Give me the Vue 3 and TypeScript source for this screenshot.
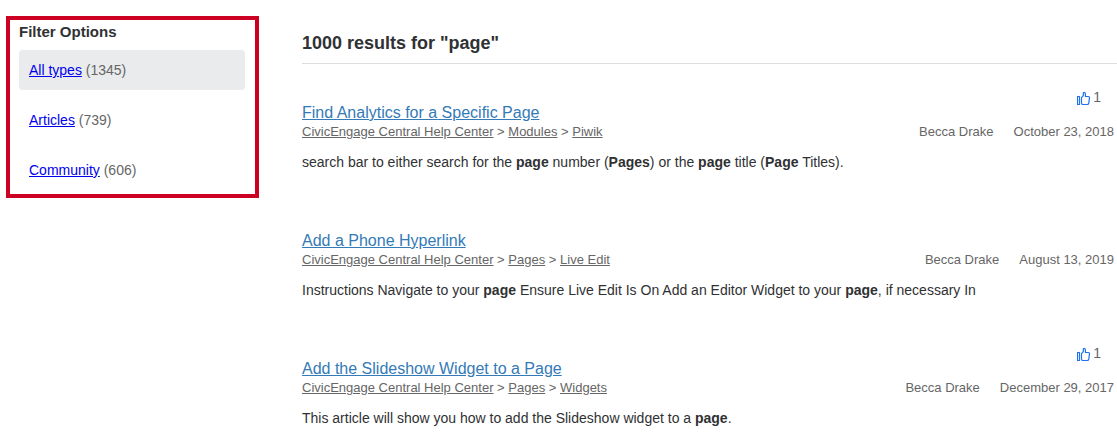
<script setup lang="ts">
interface Filter {
  label: string
  count: number
}

interface Segment {
  text: string
  match?: boolean
}

interface Result {
  title: string
  path: string[]
  author: string
  date: string
  votes: number
  snippet: Segment[]
}

const query = 'page'
const total = 1000
const activeFilter = 'All types'

const filters: Filter[] = [
  { label: 'All types', count: 1345 },
  { label: 'Articles', count: 739 },
  { label: 'Community', count: 606 },
]

const results: Result[] = [
  {
    title: 'Find Analytics for a Specific Page',
    path: ['CivicEngage Central Help Center', 'Modules', 'Piwik'],
    author: 'Becca Drake',
    date: 'October 23, 2018',
    votes: 1,
    snippet: [
      { text: 'search bar to either search for the ' },
      { text: 'page', match: true },
      { text: ' number (' },
      { text: 'Pages', match: true },
      { text: ') or the ' },
      { text: 'page', match: true },
      { text: ' title (' },
      { text: 'Page', match: true },
      { text: ' Titles).' },
    ],
  },
  {
    title: 'Add a Phone Hyperlink',
    path: ['CivicEngage Central Help Center', 'Pages', 'Live Edit'],
    author: 'Becca Drake',
    date: 'August 13, 2019',
    votes: 0,
    snippet: [
      { text: 'Instructions Navigate to your ' },
      { text: 'page', match: true },
      { text: ' Ensure Live Edit Is On Add an Editor Widget to your ' },
      { text: 'page', match: true },
      { text: ', if necessary In' },
    ],
  },
  {
    title: 'Add the Slideshow Widget to a Page',
    path: ['CivicEngage Central Help Center', 'Pages', 'Widgets'],
    author: 'Becca Drake',
    date: 'December 29, 2017',
    votes: 1,
    snippet: [
      { text: 'This article will show you how to add the Slideshow widget to a ' },
      { text: 'page', match: true },
      { text: '.' },
    ],
  },
]
</script>

<template>
  <div class="search-page">
    <aside class="filters">
      <h2 class="filters-title">Filter Options</h2>
      <ul class="filter-list">
        <li
          v-for="filter in filters"
          :key="filter.label"
          class="filter"
          :class="{ active: filter.label === activeFilter }"
        >
          <a href="#">{{ filter.label }}</a> <span>({{ filter.count }})</span>
        </li>
      </ul>
    </aside>

    <main class="results">
      <h1 class="results-title">{{ total }} results for "{{ query }}"</h1>
      <article v-for="result in results" :key="result.title" class="result">
        <header class="result-head">
          <h3 class="result-title"><a href="#">{{ result.title }}</a></h3>
          <div v-if="result.votes" class="votes">
            <svg class="thumb" viewBox="0 0 13 13" width="13" height="13" aria-hidden="true">
              <path d="M.5 4.5h2v8h-2z" />
              <path d="M4.5 5.6 6.3 3.7V1.4Q6.3.5 7.2.5T8.4 1.8V4.5H11.4Q12.6 4.5 12.5 5.7L11.8 11.2Q11.6 12.5 10.4 12.5H6Q4.5 12.5 4.5 11Z" />
            </svg>
            <span>{{ result.votes }}</span>
          </div>
        </header>
        <div class="meta">
          <nav class="crumbs" aria-label="Breadcrumb">
            <template v-for="(crumb, index) in result.path" :key="crumb">
              <span v-if="index > 0"> &gt; </span><a href="#">{{ crumb }}</a>
            </template>
          </nav>
          <div class="byline">
            <span>{{ result.author }}</span>
            <time>{{ result.date }}</time>
          </div>
        </div>
        <p class="snippet"><template v-for="(part, i) in result.snippet" :key="i"><b v-if="part.match">{{ part.text }}</b><template v-else>{{ part.text }}</template></template></p>
      </article>
    </main>
  </div>
</template>

<style>
body {
  background: #fff;
}
</style>

<style scoped>
.search-page {
  display: grid;
  grid-template-columns: 253px minmax(0, 1fr);
  column-gap: 43px;
  align-items: start;
  padding-left: 6px;
  color: #2f3133;
  font-family: "Liberation Sans", Arial, sans-serif;
  font-size: 14px;
  line-height: 20px;
}

.filters {
  margin-top: 16px;
  padding: 2px 10px 4px 9px;
  border: 4px solid #cc0022;
}

.filters-title {
  margin: 0 0 8px;
  font-size: 15px;
  line-height: 20px;
}

.filter-list {
  display: grid;
  gap: 10px;
  margin: 0;
  padding: 0;
  list-style: none;
}

.filter {
  padding: 10px;
  border-radius: 4px;
  color: #666;
}

.filter.active {
  background: #e9ebed;
}

.filter a {
  color: #0000ee;
}

.results-title {
  margin: 0;
  padding: 32px 0 9px;
  border-bottom: 1px solid #ddd;
  font-size: 18px;
  line-height: 22px;
}

.result {
  padding: 22px 3px 20px 0;
}

.result-head {
  display: flex;
  justify-content: space-between;
  min-height: 37px;
}

.result-title {
  align-self: flex-end;
  margin: 0;
  font-size: 16px;
  font-weight: 400;
  line-height: 20px;
}

.result-title a {
  color: #337ab7;
}

.votes {
  display: flex;
  align-items: flex-start;
  gap: 3px;
  margin-right: 13px;
  color: #666;
  line-height: 22px;
}

.thumb {
  margin-top: 6px;
  fill: none;
  stroke: #1f73f0;
  stroke-width: 1.2;
  stroke-linejoin: round;
}

.meta {
  display: flex;
  justify-content: space-between;
  color: #666;
  font-size: 13px;
  line-height: 18px;
}

.crumbs a {
  color: #666;
}

.byline {
  display: flex;
  gap: 20px;
}

.snippet {
  margin: 11px 0 0;
}
</style>
